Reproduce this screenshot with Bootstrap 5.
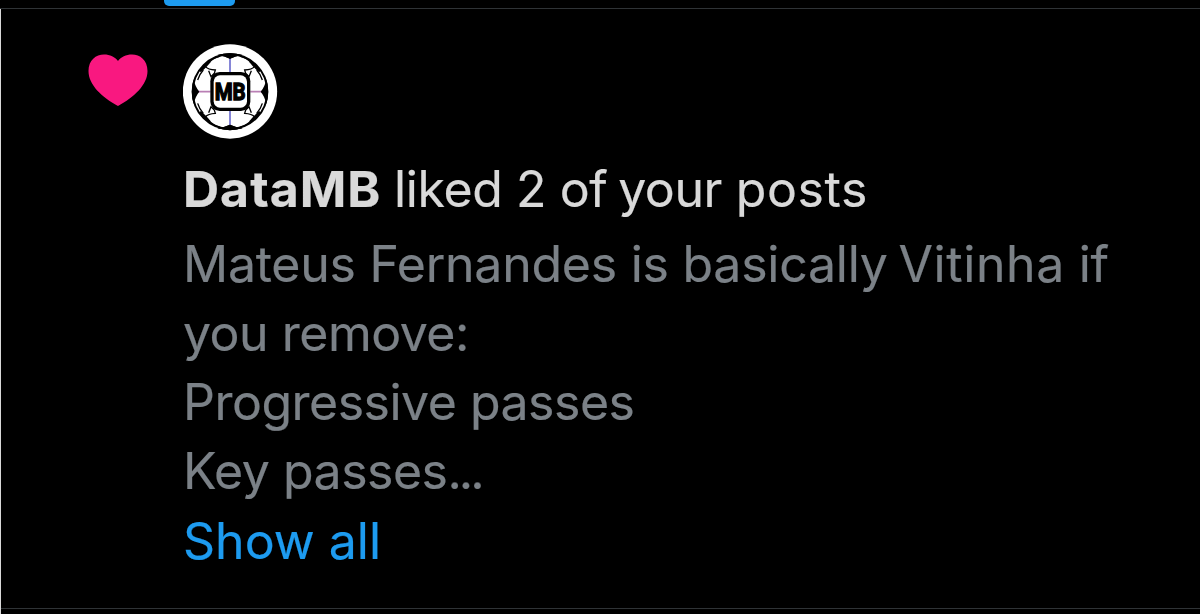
<!DOCTYPE html>
<html lang="en">
<head>
<meta charset="utf-8">
<meta name="viewport" content="width=device-width, initial-scale=1">
<title>Notifications</title>
<link href="https://cdn.jsdelivr.net/npm/bootstrap@5.3.0/dist/css/bootstrap.min.css" rel="stylesheet">
<style>
body{background:#000;font-family:Inter,"Liberation Sans",sans-serif;font-size:50px;height:614px}
.tabs{height:9px;border-bottom:1px solid #2f3336;padding-left:164px}
.tab-mark{width:71px;height:6px;background:#1d9bf0;border-radius:0 0 5px 5px}
.feed{height:605px;border-left:1px solid #d9d9d9}
.notice{height:600px;border-bottom:1px solid #2f3336;padding:35px 0 0 87px}
.heart{width:60px;height:52px;margin-top:10px}
.main-col{margin-left:35px}
.avatar{width:95px;height:95px}
.headline,.excerpt,.show-all{-webkit-text-stroke:.2px}
.headline{color:#d9d9d9;line-height:68px;margin-top:16px;letter-spacing:-.4px}
.headline b{letter-spacing:1px;margin-right:-1px}
.near{margin-left:-3px}
.wide{letter-spacing:.6px}
.excerpt{color:#7b8187;line-height:69px;margin-top:7px;letter-spacing:-.5px}
.first-line{letter-spacing:-.25px}
.first-line .wide{margin-left:-3px;letter-spacing:.6px}
.dots{letter-spacing:-3px}
.show-all{color:#1d9bf0;line-height:70px}
.crest{font-family:Roboto,sans-serif;font-weight:700;font-size:72px;stroke:#000;stroke-width:4px}
</style>
</head>
<body class="overflow-hidden">
<nav class="tabs"><div class="tab-mark"></div></nav>
<main class="feed">
<article class="notice d-flex align-items-start">
<svg class="heart flex-shrink-0" viewBox="0 0 60 52" aria-hidden="true"><path fill="#f91880" d="M30 52C14 43 0.500 31 0.500 17C0.500 6 8 0.500 16 0.500C22 0.500 27 3 30 7C33 3 38 0.500 44 0.500C52 0.500 59.500 6 59.500 17C59.500 31 46 43 30 52Z"/></svg>
<div class="main-col text-nowrap">
<svg class="avatar d-block" viewBox="9 12 285 285" role="img" aria-label="DataMB">
<circle cx="150" cy="154.500" r="141.500" fill="#fff"/>
<circle cx="150" cy="155" r="112" fill="none" stroke="#000" stroke-width="6"/>
<path stroke="#6f6fd0" stroke-width="5" d="M150 50V98M150 212V260"/>
<path stroke="#b97fb4" stroke-width="5" d="M45 155H92M211 155H258"/>
<defs>
<g id="panel">
<path d="M112 45Q150 34 188 45Q165 49 150 56Q135 49 112 45Z"/>
<path d="M57 90L86 61L92 66Q82 80 62 97Z"/>
<path fill="none" stroke="#000" stroke-width="4" d="M120 48Q98 54 87 68M53 120Q58 103 70 90"/>
<path fill="none" stroke="#000" stroke-width="4" d="M76 79Q84 89 106 90L103 100L93 110L86 92"/>
</g>
</defs>
<use href="#panel"/>
<use href="#panel" transform="matrix(-1 0 0 1 300 0)"/>
<use href="#panel" transform="matrix(1 0 0 -1 0 310)"/>
<use href="#panel" transform="matrix(-1 0 0 -1 300 310)"/>
<path d="M41 117Q30 155 41 193Q45 170 58 155Q45 140 41 117ZM259 117Q270 155 259 193Q255 170 242 155Q255 140 259 117Z"/>
<rect x="91" y="96" width="120" height="117" rx="28"/>
<rect x="101" y="106" width="100" height="97" rx="19" fill="#fff"/>
<text class="crest" x="104" y="181" textLength="93" lengthAdjust="spacingAndGlyphs">MB</text>
</svg>
<div class="headline"><b>DataMB</b> liked 2 of <span class="near">your</span> <span class="wide">posts</span></div>
<div class="excerpt"><span class="first-line">Mateus Fernandes is basically <span class="wide">Vitinha</span> if</span><br>you remove:<br>Progressive passes<br>Key passes<span class="dots">...</span></div>
<a class="show-all d-block text-decoration-none" href="#">Show all</a>
</div>
</article>
</main>
<script src="https://cdn.jsdelivr.net/npm/bootstrap@5.3.0/dist/js/bootstrap.bundle.min.js"></script>
</body>
</html>
